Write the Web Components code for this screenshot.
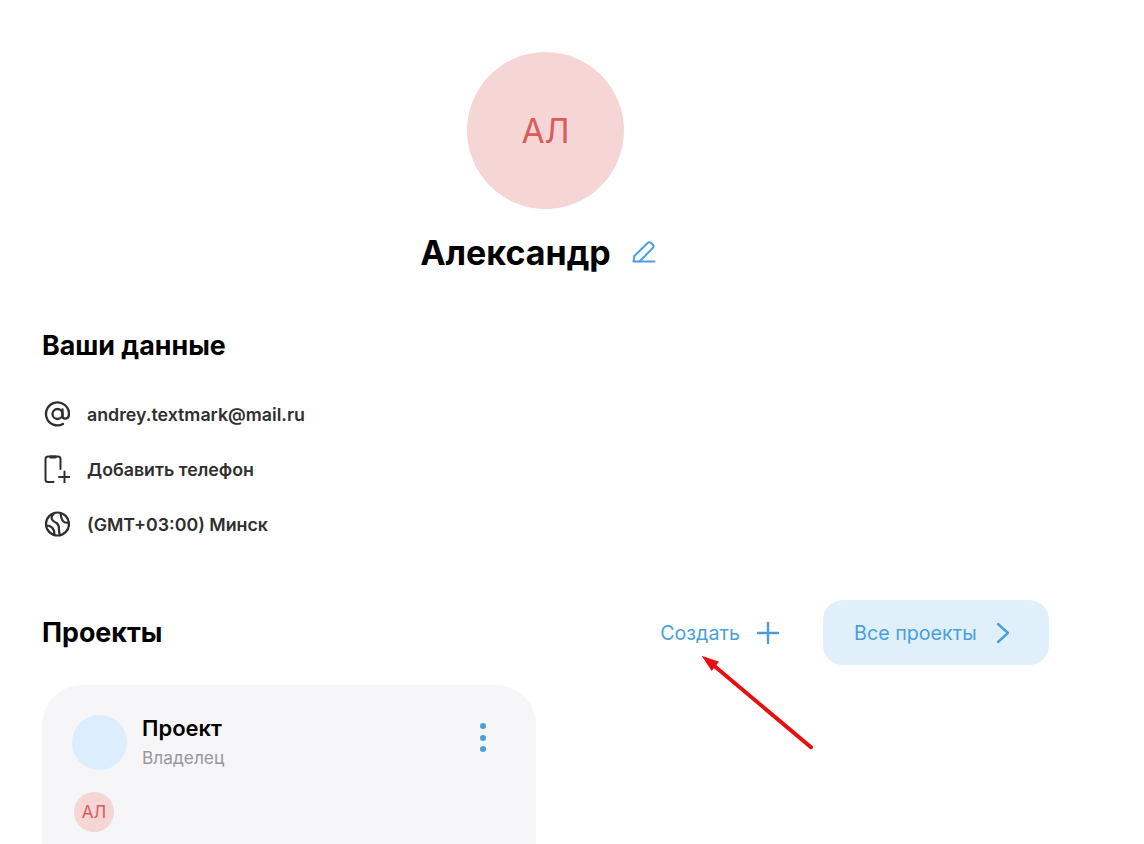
<!DOCTYPE html>
<html lang="ru">
<head>
<meta charset="utf-8">
<style>
html,body{margin:0;padding:0;background:#fff;height:844px;overflow:hidden;font-family:Inter,"Noto Sans",sans-serif;}
</style>
</head>
<body>
<profile-page></profile-page>
<template id="t-avatar">
<style>
:host{display:flex;align-items:center;justify-content:center;border-radius:50%;background:#f6d5d5;color:#d85c5c;width:var(--s,40px);height:var(--s,40px);font-size:var(--f,16px);font-weight:400;flex:none;}
</style><slot></slot>
</template>
<template id="t-row">
<style>
:host{display:flex;align-items:center;height:30px;gap:17px;color:#2f2f2f;font-size:17.8px;font-weight:600;}
.i{width:28px;height:28px;display:flex;flex:none;}
</style><span class="i"><slot name="icon"></slot></span><span><slot></slot></span>
</template>
<template id="t-card">
<style>
:host{display:block;width:494px;height:200px;box-sizing:border-box;background:#f6f6f8;border-radius:40px;padding:30px;}
.top{display:flex;gap:15px;align-items:flex-start;}
.blob{width:55px;height:55px;border-radius:50%;background:#dcedfb;flex:none;}
.t{flex:1;}
.n{font-size:22px;font-weight:600;color:#000;line-height:26px;margin-top:0;}
.r{font-size:17.3px;color:#98989c;line-height:20px;margin-top:7px;}
.dots{display:flex;flex-direction:column;gap:5.5px;margin:8px 20px 0 0;}
.dots i{width:6px;height:6px;border-radius:50%;background:#4a9fdc;}
.who{margin:22px 0 0 2px;}
</style>
<div class="top"><div class="blob"></div><div class="t"><div class="n"><slot name="name"></slot></div><div class="r"><slot name="role"></slot></div></div><div class="dots"><i></i><i></i><i></i></div></div>
<div class="who"><slot name="member"></slot></div>
</template>
<template id="t-page">
<style>
:host{display:block;position:relative;width:1007px;margin-left:42px;height:844px;}
.head{display:flex;flex-direction:column;align-items:center;padding-top:52px;}
.name{display:flex;align-items:center;gap:21px;margin-top:23px;height:41px;font-size:34px;font-weight:700;color:#000;padding-right:14px;}
.name svg{margin-left:-1px;margin-top:-1px;}
h2{margin:0;font-size:26.8px;font-weight:700;color:#000;line-height:32px;}
.data{margin-top:56px;}
.rows{display:flex;flex-direction:column;gap:25px;margin-top:38px;}
.proj{display:flex;align-items:center;margin-top:61px;height:65px;}
.proj h2{flex:1;padding-bottom:2px;}
.create{display:flex;align-items:center;gap:16px;color:#4a9fdc;font-size:19.7px;margin-right:43px;}
.all{display:flex;align-items:center;gap:19px;width:226px;height:65px;box-sizing:border-box;padding-left:31px;background:#dff0fb;border-radius:20px;color:#4a9fdc;font-size:19.7px;}
.all svg{margin-left:-1px;}
.card{margin-top:20px;}
svg{display:block;}
.arrow{position:absolute;left:650px;top:640px;}
</style>
<div class="head">
<x-avatar style="--s:157px;--f:33.5px">АЛ</x-avatar>
<div class="name"><span>Александр</span>
<svg width="26" height="26" viewBox="0 0 26 26" fill="none" stroke="#4a9fdc" stroke-width="2" stroke-linejoin="round" stroke-linecap="round"><path d="M2.500 22.500 L3.400 17 L16.600 4 Q18.400 2.400 20.200 4 L21.800 5.600 Q23.400 7.400 21.800 9 L8.500 22.500 Z"/><path d="M8.500 22.500 H23.500"/></svg>
</div>
</div>
<div class="data">
<h2>Ваши данные</h2>
<div class="rows">
<x-row><svg slot="icon" width="28" height="28" viewBox="0 0 28 28" fill="none" stroke="#2f2f2f" stroke-width="2.300" stroke-linecap="round"><circle cx="15.500" cy="14" r="5"/><path d="M20.500 9.500V15.500Q20.500 18.600 23 18.600Q27 18.600 27 13.500A11.500 11.500 0 1 0 21 24"/></svg>andrey.textmark@mail.ru</x-row>
<x-row><svg slot="icon" width="28" height="28" viewBox="0 0 28 28" fill="none" stroke="#2f2f2f" stroke-width="2" stroke-linecap="round"><path d="M11.500 27H6Q3.500 27 3.500 24.500V4Q3.500 1.500 6 1.500H16Q18.500 1.500 18.500 4V14"/><path d="M8.500 2H13.500" stroke-width="2.800"/><path d="M22.500 16.500V27.500M17 22H28"/></svg>Добавить телефон</x-row>
<x-row><svg slot="icon" width="28" height="28" viewBox="0 0 28 28" fill="none" stroke="#2f2f2f" stroke-width="2.200" stroke-linecap="round" stroke-linejoin="round"><circle cx="15.500" cy="14" r="11.500"/><path d="M12.500 3Q8.500 6.500 10 9.500Q11.500 12 14.500 13Q17 14.500 17 19Q17 23 18 25"/><path d="M4.300 15.500Q8 15.500 10 17.500Q12.500 20 12.500 25"/><path d="M26.800 13Q22 13 20.500 10.500Q19 8 18.500 3"/></svg>(GMT+03:00) Минск</x-row>
</div>
</div>
<div class="proj">
<h2>Проекты</h2>
<div class="create"><span>Создать</span><svg width="24" height="24" viewBox="0 0 24 24" fill="none" stroke="#4a9fdc" stroke-width="2.400" stroke-linecap="round"><path d="M12 2V22M2 12H22"/></svg></div>
<div class="all"><span>Все проекты</span><svg width="16" height="24" viewBox="0 0 16 24" fill="none" stroke="#4a9fdc" stroke-width="2.400" stroke-linecap="round" stroke-linejoin="round"><path d="M3 3L13 12L3 21"/></svg></div>
</div>
<x-card class="card"><span slot="name">Проект</span><span slot="role">Владелец</span><x-avatar slot="member" style="--s:40px;--f:17px">АЛ</x-avatar></x-card>
<svg class="arrow" width="130" height="120" viewBox="0 0 130 120" fill="none"><path d="M119 107.300L20 24" stroke="#e80f0f" stroke-width="4" stroke-linecap="round"/><path d="M9.700 15.700L27 21.700L19.700 31Z" fill="#e80f0f"/></svg>
</template>
<script>
function def(tag,id){customElements.define(tag,class extends HTMLElement{constructor(){super();this.attachShadow({mode:"open"}).appendChild(document.getElementById(id).content.cloneNode(true));}});}
def("x-avatar","t-avatar");def("x-row","t-row");def("x-card","t-card");def("profile-page","t-page");
</script>
</body>
</html>
